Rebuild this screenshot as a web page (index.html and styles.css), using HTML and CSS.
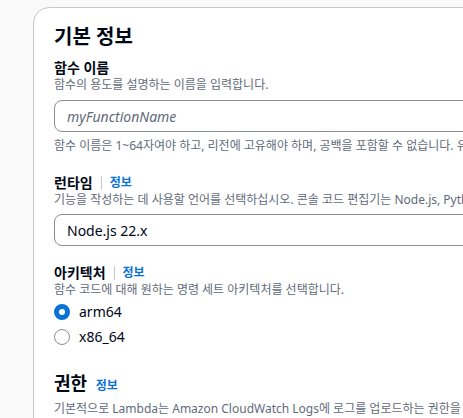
FILE: index.html
```html
<!DOCTYPE html>
<html lang="ko">
<head>
<meta charset="utf-8">
<link rel="stylesheet" href="styles.css">
</head>
<body>
<div class="page">
  <section class="card">
    <h2 class="card-title">기본 정보</h2>

    <div class="field">
      <div class="label">함수 이름</div>
      <div class="desc">함수의 용도를 설명하는 이름을 입력합니다.</div>
      <div class="input placeholder name-input">myFunctionName</div>
      <div class="constraint">함수 이름은 1~64자여야 하고, 리전에 고유해야 하며, 공백을 포함할 수 없습니다. 유효한 문자는 a-z, A-Z, 0-9, 하이픈(-) 및 밑줄(_)입니다.</div>
    </div>

    <div class="field runtime">
      <div class="label">런타임<span class="sep"></span><a class="info">정보</a></div>
      <div class="desc">기능을 작성하는 데 사용할 언어를 선택하십시오. 콘솔 코드 편집기는 Node.js, Python 및 Ruby만 지원합니다.</div>
      <div class="input value">Node.js 22.x</div>
    </div>

    <div class="field">
      <div class="label">아키텍처<span class="sep"></span><a class="info">정보</a></div>
      <div class="desc">함수 코드에 대해 원하는 명령 세트 아키텍처를 선택합니다.</div>
      <div class="radios">
        <div class="radio"><span class="dot checked"></span><span>arm64</span></div>
        <div class="radio"><span class="dot"></span><span>x86_64</span></div>
      </div>
    </div>

    <div class="section">
      <div class="section-title">권한 <a class="info">정보</a></div>
      <div class="desc">기본적으로 Lambda는 Amazon CloudWatch Logs에 로그를 업로드하는 권한을 가진 실행 역할을 생성합니다.</div>
    </div>
  </section>
</div>
</body>
</html>
```

FILE: styles.css
```css
html, body {
  margin: 0;
  padding: 0;
  background: #fafafa;
  overflow: hidden;
  width: 463px;
  height: 418px;
}
body {
  font-family: "Noto Sans", "Noto Sans CJK KR", sans-serif;
  color: #000716;
}
.page {
  padding: 7px 0 0 33px;
}
.card {
  width: 700px;
  background: #ffffff;
  border: 1px solid #c6c6cd;
  border-radius: 16px;
  padding: 17px 20px 20px 20px;
  box-sizing: border-box;
}
.card-title {
  margin: 0 0 10px 0;
  font-size: 20px;
  line-height: 24px;
  font-weight: 700;
}
.field {
  margin-bottom: 20px;
}
.field.runtime {
  margin-bottom: 18px;
}
.label {
  display: flex;
  align-items: center;
  font-size: 14px;
  font-weight: 700;
  line-height: 18px;
}
.sep {
  display: inline-block;
  width: 1px;
  height: 14px;
  background: #c6c6cd;
  margin: 0 8px 0 8px;
}
.info {
  color: #0972d3;
  font-size: 12px;
  font-weight: 700;
}
.desc {
  font-size: 12px;
  line-height: 16px;
  color: #5f6b7a;
  white-space: nowrap;
}
.input {
  margin-top: 6px;
  width: 600px;
  height: 32px;
  box-sizing: border-box;
  border: 1px solid #8c8c94;
  border-radius: 8px;
  padding: 0 12px;
  display: flex;
  align-items: center;
  font-size: 14px;
}
.name-input {
  margin-top: 7px;
}
.placeholder {
  color: #5f6b7a;
  font-style: italic;
}
.value {
  color: #000716;
}
.constraint {
  margin-top: 6px;
  font-size: 12px;
  line-height: 16px;
  color: #5f6b7a;
  white-space: nowrap;
}
.radios {
  margin-top: 6px;
  display: flex;
  flex-direction: column;
  gap: 9px;
}
.radio {
  display: flex;
  align-items: center;
  gap: 9px;
  font-size: 14px;
  line-height: 16px;
}
.dot {
  width: 16px;
  height: 16px;
  box-sizing: border-box;
  border: 1.5px solid #8c8c94;
  border-radius: 50%;
  background: #fff;
}
.dot.checked {
  border: 5px solid #0972d3;
}
.section {
  margin-top: 27px;
}
.section-title {
  font-size: 18px;
  font-weight: 700;
  line-height: 22px;
}
.section-title .info {
  font-size: 12px;
  margin-left: 4px;
}
.section .desc {
  margin-top: 4px;
}
```
